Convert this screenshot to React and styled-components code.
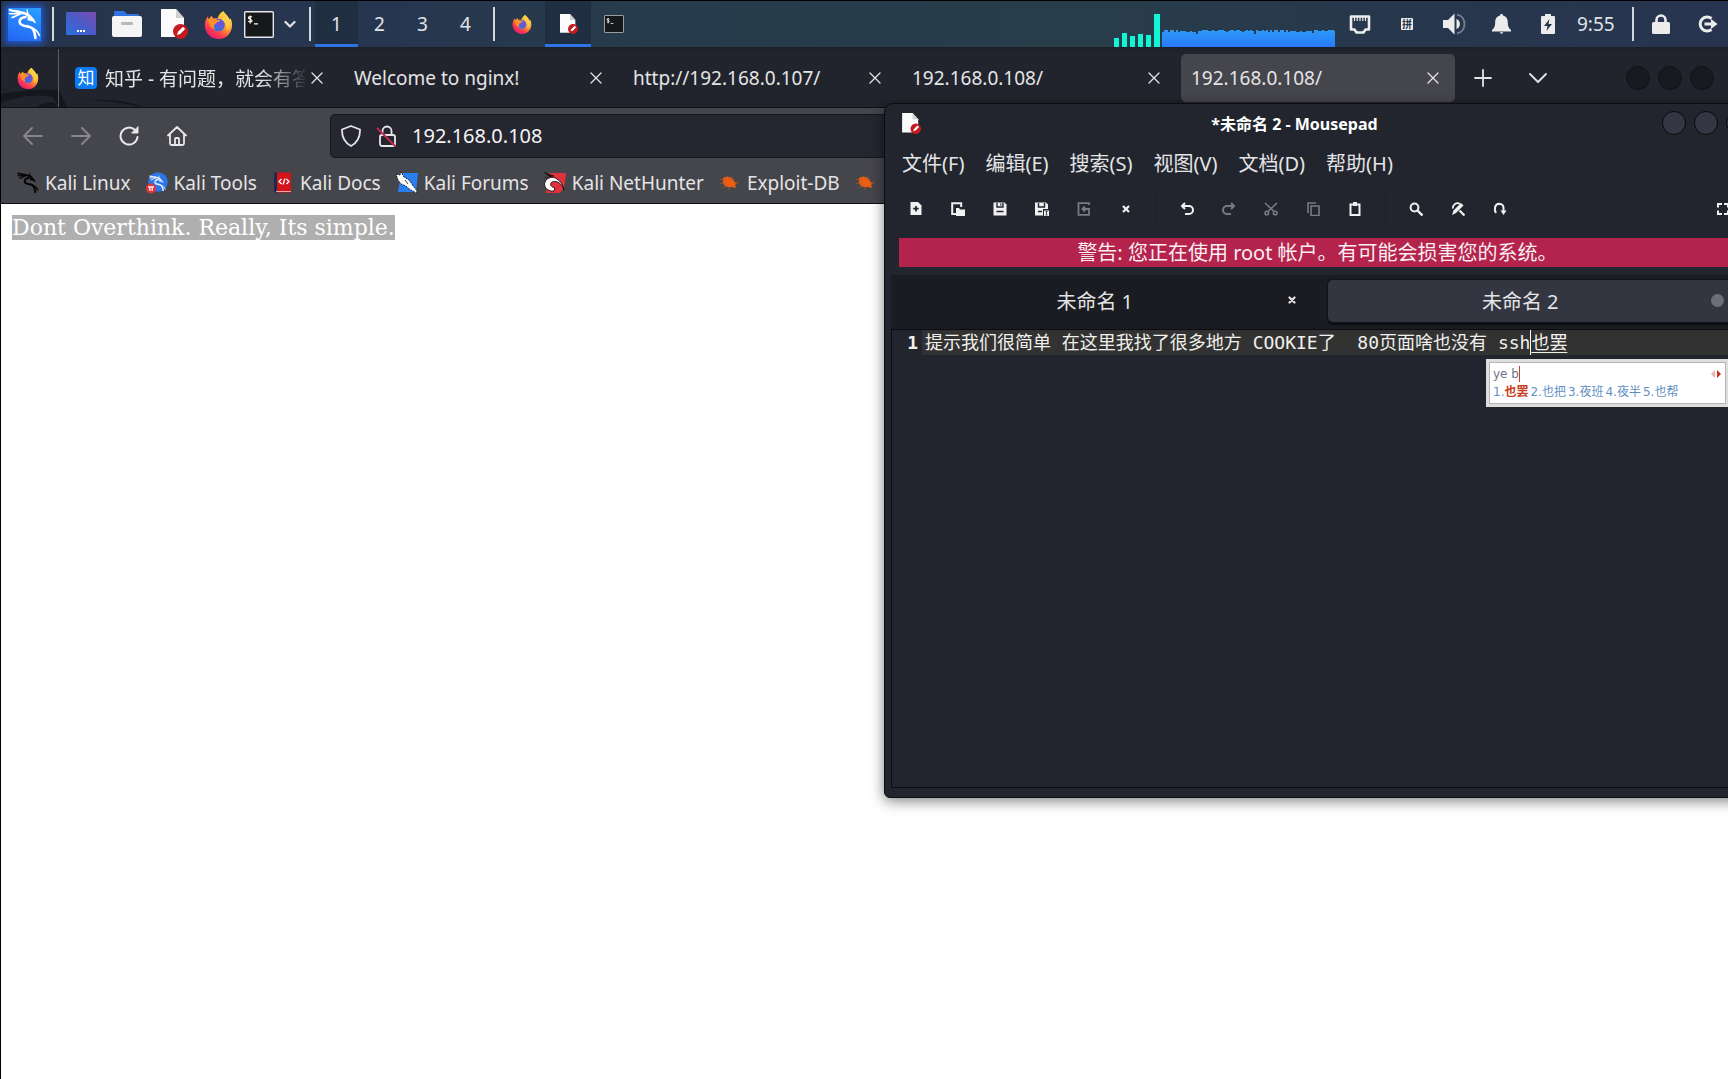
import React from "react";
import styled, { createGlobalStyle, css } from "styled-components";

const ui = `"Noto Sans", "Noto Sans CJK SC", sans-serif`;
const mono = `"DejaVu Sans Mono", "Noto Sans CJK SC", monospace`;

const Global = createGlobalStyle`
  * { box-sizing: border-box; }
  body { margin: 0; font-family: ${ui}; font-size: 19px; color: #e4e4e6; background: #000; }
  button { font: inherit; color: inherit; background: none; border: 0; padding: 0; display: inline-flex; align-items: center; justify-content: center; }
  a { color: inherit; text-decoration: none; }
  svg { display: block; flex: none; }
`;

const Desktop = styled.div`
  position: relative;
  height: 100vh;
  overflow: hidden;
  display: flex;
  flex-direction: column;
  border-top: 1px solid #000;
  border-left: 1px solid #000;
`;

/* ---------- top panel ---------- */
const Panel = styled.header`
  flex: none;
  height: 46px;
  display: flex;
  align-items: center;
  padding: 0 0 0 7px;
  background: linear-gradient(90deg, #26334b 0%, #273650 22%, #263b4b 36%, #283d4a 62%, #27374d 82%, #28344f 100%);
`;
const Divider = styled.span`
  flex: none;
  width: 2px;
  height: 34px;
  background: #d3d7dc;
`;
const KaliButton = styled.button`
  width: 33px;
  height: 33px;
  margin-right: 11px;
  color: #fff;
  background: linear-gradient(200deg, #2ba0ff, #2364f4);
  box-shadow: 0 0 7px 3px #2159cf;
`;
const Launchers = styled.nav`
  display: flex;
  align-items: center;
  gap: 16px;
  margin: 0 13px 0 12px;
`;
const Split = styled.div`
  display: flex;
  align-items: center;
  gap: 10px;
  margin-left: -5px;
`;
const Workspaces = styled.nav`
  display: flex;
  height: 100%;
  margin: 0 6px 0 4px;
`;
const PanelTab = styled.button`
  width: ${(p) => (p.$wide ? 46 : 43)}px;
  height: 100%;
  border-bottom: 3px solid transparent;
  border-top: 3px solid transparent;
  ${(p) => p.$active && css`
    background: #1f2e40;
    border-top-color: #1f2e40;
    border-bottom-color: #2f74e6;
  `}
`;
const Tasks = styled.nav`
  display: flex;
  height: 100%;
  margin-left: 4px;
`;
const Spacer = styled.div`
  flex: 1;
`;
const Monitor = styled.div`
  display: flex;
  align-items: flex-end;
  align-self: stretch;
  margin-right: 5px;
`;
const Tray = styled.div`
  display: flex;
  align-items: center;
  gap: 7px;
`;
const TrayButton = styled.button`
  width: 40px;
  height: 46px;
  color: #ececec;
`;
const Clock = styled.time`
  width: 50px;
  padding-left: 2px;
  color: #dfe3e6;
`;
const PinBadge = styled.span`
  width: 12px;
  height: 12px;
  border-radius: 1px;
  background: #ececec;
  color: #26374b;
  font-size: 10px;
  line-height: 12px;
  font-weight: 700;
  text-align: center;
`;

/* ---------- browser ---------- */
const Browser = styled.main`
  flex: 1;
  display: flex;
  flex-direction: column;
  min-height: 0;
  background: #fff;
`;
const TabBar = styled.div`
  position: relative;
  flex: none;
  height: 61px;
  display: flex;
  align-items: center;
  padding: 2px 14px 0 0;
  background: linear-gradient(#1b1f26, #22242d 6px);
  border-bottom: 1px solid #0e0f13;
`;
const Wallpaper = styled.svg`
  position: absolute;
  left: 0;
  bottom: 0;
`;
const FirefoxSlot = styled.div`
  position: relative;
  align-self: stretch;
  width: 58px;
  display: flex;
  align-items: center;
  justify-content: center;
  padding-right: 4px;
  border-right: 1px solid #5a5c63;
  margin-right: 6px;
`;
const Tabs = styled.div`
  position: relative;
  display: flex;
  gap: 5px;
  flex: 0 1 1390px;
  min-width: 0;
`;
const Tab = styled.div`
  flex: 1 1 0;
  min-width: 0;
  height: 48px;
  display: flex;
  align-items: center;
  gap: 8px;
  padding: 0 10px;
  border-radius: 5px;
  background: ${(p) => (p.$active ? "#45454c" : "transparent")};
`;
const Favicon = styled.span`
  flex: none;
  width: 22px;
  height: 22px;
  border-radius: 4px;
  background: #0a7af5;
  color: #fff;
  font-size: 17px;
  line-height: 21px;
  text-align: center;
`;
const TabTitle = styled.span`
  flex: 1;
  min-width: 0;
  overflow: hidden;
  white-space: nowrap;
  ${(p) => p.$fade && css`
    mask-image: linear-gradient(90deg, #000 78%, transparent 102%);
  `}
`;
const CloseButton = styled.button`
  flex: none;
  width: 24px;
  height: 24px;
  margin-left: ${(p) => (p.$tight ? -8 : 0)}px;
`;
const TabTool = styled.button`
  position: relative;
  width: 55px;
  height: 48px;
`;
const Circles = styled.div`
  display: flex;
  gap: 8px;
  margin-left: auto;
`;
const Circle = styled.button`
  width: 24px;
  height: 24px;
  border-radius: 50%;
  border: 1px solid ${(p) => (p.$dim ? "#101116" : "#08090c")};
  background: ${(p) => (p.$dim ? "#191a20" : "#343743")};
`;
const NavBar = styled.div`
  flex: none;
  height: 55px;
  display: flex;
  align-items: center;
  padding-left: 8px;
  background: #45454c;
`;
const NavButton = styled.button`
  width: 48px;
  height: 44px;
  color: #e8e8ea;
  opacity: ${(p) => (p.$off ? 0.4 : 1)};
`;
const UrlBox = styled.label`
  flex: 1;
  display: flex;
  align-items: center;
  height: 44px;
  margin: 0 160px 0 129px;
  padding: 0 9px;
  gap: 14px;
  border: 1px solid #15161b;
  border-radius: 5px;
  background: #25262f;
`;
const UrlInput = styled.input`
  flex: 1;
  min-width: 0;
  border: 0;
  padding: 0;
  outline: 0;
  background: none;
  color: #f4f4f6;
  font: inherit;
  font-size: 20px;
`;
const Bookmarks = styled.nav`
  flex: none;
  height: 41px;
  display: flex;
  align-items: center;
  gap: 15px;
  padding: 0 0 1px 16px;
  background: #45454c;
  border-bottom: 1px solid #0e0f13;
  white-space: nowrap;
`;
const Bookmark = styled.a`
  display: flex;
  align-items: center;
  gap: 6px;
`;
const PageBody = styled.article`
  padding: 11px;
  font-family: "DejaVu Serif", serif;
  font-size: 22px;
  line-height: 25px;
`;
const Selected = styled.span`
  display: inline-block;
  background: #afafaf;
  color: #fff;
`;

/* ---------- Mousepad ---------- */
const Window = styled.section`
  position: absolute;
  left: 883px;
  right: -32px;
  top: 102px;
  height: 695px;
  display: flex;
  flex-direction: column;
  padding: 0 6px 9px;
  border: 1px solid #0c0d12;
  border-radius: 9px 9px 6px 6px;
  background: #22252e;
  box-shadow: 0 3px 14px rgba(0, 0, 0, 0.5);
  font-size: 20px;
`;
const TitleBar = styled.div`
  flex: none;
  height: 38px;
  display: flex;
  align-items: center;
  padding: 0 3px 0 9px;
`;
const Title = styled.h1`
  flex: 1;
  margin: 0;
  padding-left: 6px;
  text-align: center;
  font-size: 16px;
  font-weight: 700;
  color: #fff;
`;
const MenuBar = styled.nav`
  flex: none;
  height: 41px;
  display: flex;
  align-items: center;
  gap: 21px;
  padding-left: 11px;
`;
const ToolBar = styled.div`
  flex: none;
  height: 51px;
  display: flex;
  align-items: center;
  padding: 0 9px 0 4px;
`;
const ToolButton = styled.button`
  width: 42px;
  height: 40px;
  color: ${(p) => (p.$off ? "#777a82" : "#f1f1f1")};
`;
const ToolRule = styled.span`
  width: 1px;
  height: 40px;
  margin: 0 9px;
  background: #1e2129;
`;
const Warning = styled.p`
  flex: none;
  margin: 4px 17px 8px 8px;
  height: 29px;
  line-height: 29px;
  text-align: center;
  color: #fbeef2;
  background: #b4234b;
`;
const DocTabs = styled.div`
  flex: none;
  height: 54px;
  display: flex;
  padding: 5px 0 7px 11px;
  background: #1b1c22;
`;
const DocTab = styled.div`
  flex: 1;
  display: flex;
  align-items: center;
  padding: 0 24px 2px 8px;
  border-radius: 5px;
  ${(p) => p.$active && css`
    background: #333641;
    box-shadow: 0 0 0 1px #121318, 0 2px 1px 1px #0c0d12;
  `}
`;
const DocName = styled.span`
  flex: 1;
  text-align: center;
`;
const Dot = styled.span`
  width: 13px;
  height: 13px;
  border-radius: 50%;
  background: #6d6f78;
`;
const Editor = styled.div`
  flex: 1;
  border: 1px solid #0c0d12;
  font-family: ${mono};
  font-size: 18px;
  line-height: 25px;
`;
const Line = styled.div`
  display: flex;
  color: #f0f0ec;
`;
const LineNumber = styled.span`
  width: 30px;
  padding-right: 4px;
  text-align: right;
  font-weight: 700;
`;
const LineText = styled.div`
  flex: 1;
  padding-left: 3px;
  white-space: pre;
  outline: 0;
  background: #323232;
`;
const Preedit = styled.u`
  border-left: 1px solid #fff;
  display: inline-block;
  text-underline-offset: 3px;
`;
const ImePopup = styled.aside`
  position: absolute;
  left: 1485px;
  right: -1px;
  top: 358px;
  padding: 3px;
  background: #dedede;
  font-family: "DejaVu Sans", "Noto Sans CJK SC", sans-serif;
  font-size: 12px;
  line-height: 19px;
`;
const ImeInner = styled.div`
  padding: 1px 3px;
  border: 1px solid #b5b5b5;
  background: #fff;
`;
const ImeRow = styled.div`
  display: flex;
  align-items: center;
  height: 19px;
  gap: 2px;
  color: #5f8fc4;
`;
const Composing = styled.span`
  margin-right: auto;
  line-height: 16px;
  color: #6d7486;
  border-right: 1px solid #c8401f;
`;
const Candidate = styled.button`
  b { color: #c8401f; }
`;

/* ---------- drawings ---------- */
const Dragon = ({ size, weight = 2.6, ...rest }) => (
  <svg width={size} height={size} viewBox="0 0 33 33" fill="none" stroke="currentColor" strokeLinecap="round" strokeLinejoin="round" {...rest}>
    <path d="M2 2c4 1.500 7 1 11 2.500" strokeWidth={weight * 0.9} />
    <path d="M1.500 5.500c4 .6 7 0 11.500-.2M4 9.500c3-.6 5-2.500 8.500-3.500" strokeWidth={weight * 0.6} />
    <path d="M12 4.500c4 .2 7 1.500 9.500 3.500" strokeWidth={weight} />
    <path d="M20 6.500L19 1.800" strokeWidth={weight * 0.5} />
    <path d="M19.500 6.500c4.500 1.500 6.500 4.500 8 8.500l-3-2-5-1.200c1-1.500.6-3.300 0-5.300z" fill="currentColor" strokeWidth={weight * 0.3} />
    <path d="M17.500 9c-4 .3-6.500 2.600-5.800 5.500.8 3.400 5.500 3.500 9.300 4.200 3.700.8 5.500 3.300 6.500 11.300" strokeWidth={weight} />
    <path d="M24.500 20c3.500 1.500 5.500 4 7 7.500" strokeWidth={weight * 0.6} />
  </svg>
);

const Firefox = ({ size }) => {
  const id = `ff${size}`;
  return (
    <svg width={size} height={size} viewBox="0 0 30 30">
      <defs>
        <linearGradient id={`${id}a`} x1="0.8" y1="0.1" x2="0.2" y2="0.95">
          <stop offset="0" stopColor="#ffe14a" />
          <stop offset="0.4" stopColor="#ff9a2e" />
          <stop offset="0.75" stopColor="#fb3a4e" />
          <stop offset="1" stopColor="#e3197a" />
        </linearGradient>
        <radialGradient id={`${id}b`} cx="0.6" cy="0.4">
          <stop offset="0" stopColor="#8246d8" />
          <stop offset="1" stopColor="#3b6fe0" />
        </radialGradient>
      </defs>
      <path d="M20 1c1 3 5 5 6.600 9l1-1.500c2 5 2 11-1 15.200A14 14 0 0 1 1.500 20C0 15 1.200 10 4 6.500l.6 3L8 6l1.500 3c2-.6 3-.6 4.500-.3C15 5 17 3 20 1z" fill={`url(#${id}a)`} />
      <circle cx="15" cy="15.500" r="6.500" fill={`url(#${id}b)`} />
      <path d="M4.500 9.500c3-1.500 6-1 8 .8 1.500-.4 3.500 0 4.500 1.200-1.500.8-4 1.200-4.500 2.500-2 .8-3 3-1 5.500-4 0-7.500-5-7-10z" fill="#ff8f2a" />
      <path d="M18 9c5-3 3-6 2-8 2 3 7 6 7 13 0 3-1 6-4 8 1-5-.5-9-5-13z" fill="#ffd24a" opacity=".75" />
    </svg>
  );
};

const Doc = ({ size }) => (
  <svg width={size} height={size} viewBox="0 0 30 30">
    <path d="M3 0h15l8 9v19H3z" fill="#fbfbfb" />
    <path d="M18 0l8 9h-8z" fill="#cfd0d4" />
    <circle cx="22.500" cy="22.500" r="7.500" fill="#c41a20" />
    <path d="M19 26l1-3.200 5-5 2.200 2.200-5 5z" fill="#fff" />
  </svg>
);

const Terminal = ({ w, h, line = "#e8e8e8" }) => (
  <svg width={w} height={h} viewBox="0 0 30 27">
    <rect x=".7" y=".7" width="28.600" height="25.600" rx="1" fill="#17181a" stroke={line} strokeWidth="1.400" />
    <path d="M8 6.200c-1-1-3.500-.8-3.500.6 0 1.700 3.500 1.200 3.500 3 0 1.500-2.600 1.500-3.700.4M6.200 4.500v8M10 12.800h4" stroke="#fff" strokeWidth="1.200" fill="none" />
  </svg>
);

const Screen = () => (
  <svg width="30" height="24" viewBox="0 0 30 24">
    <defs>
      <linearGradient id="scr" x1="0" y1="1" x2="1" y2="0">
        <stop offset="0" stopColor="#2c70e0" />
        <stop offset="0.5" stopColor="#4a5bc8" />
        <stop offset="1" stopColor="#7d4db0" />
      </linearGradient>
    </defs>
    <rect width="30" height="23" rx="1" fill="url(#scr)" />
    <path d="M11 18h2v2h-2zM14 18h2v2h-2zM17 18h2v2h-2z" fill="#fff" />
  </svg>
);

const Folder = () => (
  <svg width="30" height="28" viewBox="0 0 30 28">
    <path d="M2 2q0-1 1-1h9l3 3h11q1 0 1 1v6H2z" fill="#2f74e0" />
    <rect y="6" width="30" height="21" rx="2" fill="#f5f5f5" />
    <rect x="9" y="12" width="12" height="3" rx="1" fill="#b8b8b8" />
  </svg>
);

const Stroke = ({ size = 20, w = 1.8, children, box = 20 }) => (
  <svg width={size} height={size} viewBox={`0 0 ${box} ${box}`} fill="none" stroke="currentColor" strokeWidth={w} strokeLinecap="round" strokeLinejoin="round">
    {children}
  </svg>
);

const Cross = () => <Stroke size={12} box={12} w={1.3}><path d="M1 1l10 10M11 1L1 11" /></Stroke>;
const BoldCross = () => <Stroke size={8} box={8} w={2.2}><path d="M1.500 1.500l5 5M6.500 1.500l-5 5" /></Stroke>;

const cpu = Array.from({ length: 87 }, (_, i) => 15 + ((i * 7 + ((i * i) % 11)) % 5) * 0.6 - (i % 29 === 17 ? 3 : 0));
const net = [9, 14, 11, 13, 12, 33];

const Graph = () => (
  <svg width="221" height="46" viewBox="0 0 221 46">
    <defs>
      <linearGradient id="cpu" x1="0" y1="28" x2="0" y2="46" gradientUnits="userSpaceOnUse">
        <stop offset="0" stopColor="#2b9cf4" />
        <stop offset="1" stopColor="#2a78ff" />
      </linearGradient>
    </defs>
    {net.map((h, i) => <rect key={i} x={i * 8} y={46 - h} width={i === 5 ? 6 : 5} height={h} fill="#14f5d6" />)}
    {cpu.map((h, i) => <rect key={i} x={48 + i * 2} y={46 - h} width="2" height={h} fill="url(#cpu)" shapeRendering="crispEdges" />)}
  </svg>
);

const tray = [
  ["Network", <svg width="22" height="19" viewBox="0 0 22 19"><path d="M2 1.500h18v13h-3.500l-2 3h-7l-2-3H2z" fill="none" stroke="currentColor" strokeWidth="2.600" strokeLinejoin="round" /><path d="M5.500 2v4M8.200 2v4M11 2v4M13.800 2v4M16.500 2v4" stroke="currentColor" strokeWidth="1.200" /></svg>],
  ["Input method", <PinBadge>拼</PinBadge>],
  ["Volume", <svg width="23" height="22" viewBox="0 0 23 22"><path d="M0 7h5l6.500-6.500v21L5 15H0z" fill="currentColor" /><path d="M13.500 6c4.500 1.500 4.500 8.500 0 10z" fill="currentColor" /><path d="M14 1.500c10 2 10 17 0 19" fill="none" stroke="currentColor" strokeWidth="2" opacity=".4" /></svg>],
  ["Notifications", <svg width="19" height="20" viewBox="0 0 19 20"><path d="M9.500 0c1 0 1.500.6 1.500 1.400 3.500.8 4.800 3.600 4.800 6.600 0 4 .7 6 3.200 8v1.500H0V16c2.500-2 3.200-4 3.200-8 0-3 1.300-5.800 4.800-6.600C8 .6 8.500 0 9.500 0zM7.500 18.300h4l-2 1.700z" fill="currentColor" /></svg>],
  ["Battery", <svg width="14" height="20" viewBox="0 0 14 20"><path d="M4 0h6v2h3q1 0 1 1v16q0 1-1 1H1q-1 0-1-1V3q0-1 1-1h3z" fill="currentColor" /><path d="M8.500 5L3 12h3.500L5.500 17 11 10H7.500z" fill="#27364d" /></svg>],
];

const tools = [
  ["New", 0, <><path d="M1.500 0H9l3.500 3.500V13h-11z" fill="currentColor" /><path d="M7 4v5.500M4.200 6.700h5.500" stroke="#22252e" strokeWidth="1.700" /></>],
  ["Open", 0, <><path d="M6 12H1.200V1.200h9V5" fill="none" stroke="currentColor" strokeWidth="2" /><path d="M5 6h3l1 1.500h5V14H5z" fill="currentColor" /></>],
  ["Save", 0, <><path d="M.5.500h11l2 2v11H.5z" fill="currentColor" /><path d="M4 1v4h6V1M3.500 9.500h7" stroke="#22252e" strokeWidth="1.400" fill="none" /><path d="M7.800 1.500v2" stroke="#22252e" strokeWidth="1.200" /></>],
  ["Save as", 0, <><path d="M0 .5h11l2 2V7H8v6.500H0z" fill="currentColor" /><path d="M3.500 1v4h6V1M3 9.500h4" stroke="#22252e" strokeWidth="1.400" fill="none" /><path d="M9 8.500h5v5.500H9z" fill="currentColor" /><path d="M10.500 9.500h2M11.500 9.500V13M10.500 13h2" stroke="#22252e" strokeWidth=".8" /></>],
  ["Reload", 1, <path d="M12 3V1.200H1.500v11.600H12V7H5.500M8 4.500L5.500 7 8 9.500" fill="none" stroke="currentColor" strokeWidth="1.800" />],
  ["Close", 0, <path d="M4 4l6 6M10 4l-6 6" stroke="currentColor" strokeWidth="2.200" />],
  null,
  ["Undo", 0, <path d="M5 1L2 4l3 3M2.500 4H9a4 4 0 0 1 0 8H5" fill="none" stroke="currentColor" strokeWidth="2" />],
  ["Redo", 1, <path d="M9 1l3 3-3 3M11.500 4H5a4 4 0 0 0 0 8h4" fill="none" stroke="currentColor" strokeWidth="2" />],
  ["Cut", 1, <g fill="none" stroke="currentColor" strokeWidth="1.600"><path d="M1 1l9 8.500M13 1L4 9.500" /><circle cx="2.800" cy="11" r="1.800" /><circle cx="11.200" cy="11" r="1.800" /></g>],
  ["Copy", 1, <path d="M2 11V1h8M5 4h8v9.500H5z" fill="none" stroke="currentColor" strokeWidth="1.600" />],
  ["Paste", 0, <><path d="M2.500 2.500h9v10.500h-9z" fill="none" stroke="currentColor" strokeWidth="2" /><path d="M5 0h4v4H5z" fill="currentColor" /></>],
  null,
  ["Find", 0, <><circle cx="5.500" cy="5.500" r="3.900" fill="none" stroke="currentColor" strokeWidth="2" /><path d="M8.500 8.500l5 5" stroke="currentColor" strokeWidth="2.400" /></>],
  ["Replace", 0, <><path d="M2 6.500A4.500 4.500 0 0 1 9 2" fill="none" stroke="currentColor" strokeWidth="1.800" /><path d="M10 1l2.500 2.500-7.500 7.500-4 2 1.500-4.500z" fill="currentColor" /><path d="M8.500 8.500l5 5" stroke="currentColor" strokeWidth="2.200" /></>],
  ["Go to", 0, <><path d="M3 11c-2-3-1.500-9 3-9.200C9.500 1.800 10.500 4 10.500 6v4" fill="none" stroke="currentColor" strokeWidth="2" /><path d="M7.500 8.500h6L10.500 13z" fill="currentColor" /></>],
];

const tabs = [
  { title: "知乎 - 有问题，就会有答案", icon: true },
  { title: "Welcome to nginx!" },
  { title: "http://192.168.0.107/" },
  { title: "192.168.0.108/" },
  { title: "192.168.0.108/", active: true },
];

const Bug = () => (
  <svg width="22" height="22" viewBox="0 0 22 22">
    <path d="M4 6c4-2 8-2 10 2l4 4-2 1 1 3-4-1c-4 1-8-1-9-4z" fill="#ee5f14" />
    <path d="M1 7l6 2M1 11l6 1M4 16l5-3M8 4l3 4M13 5l2 4M20 10l-5 2M9 18l3-4" stroke="#b5561f" strokeWidth=".7" />
  </svg>
);

const bookmarks = [
  ["Kali Linux", <Dragon size={22} color="#050505" weight={3} />],
  ["Kali Tools", (
    <svg width="22" height="22" viewBox="0 0 22 22">
      <circle cx="12" cy="10" r="9.800" fill="#2d74e8" />
      <Dragon x="3" y="3" size={17} color="#dcebff" weight={3} />
      <circle cx="5" cy="16.500" r="5" fill="#e0343c" />
      <path d="M2 14.800h6M3.900 15v4M6.200 15v4" stroke="#fff" strokeWidth="1.200" />
    </svg>
  )],
  ["Kali Docs", (
    <svg width="22" height="22" viewBox="0 0 22 22">
      <path d="M4 .5h15v20H4z" fill="#d3141b" />
      <path d="M2 .5h3v20H2z" fill="#1c2a52" />
      <path d="M4 19.500h15" stroke="#f0a5a5" strokeWidth="1" />
      <path d="M9.500 7L7 9.500 9.500 12M14.500 7L17 9.500 14.500 12M13 6.500l-2 6" stroke="#fff" strokeWidth="1.300" fill="none" />
    </svg>
  )],
  ["Kali Forums", (
    <svg width="22" height="22" viewBox="0 0 22 22">
      <path d="M5 1h17l-2 19H2z" fill="#2a7ff0" />
      <path d="M0 2l4 1 1-3 3 5 5 3c2 2 3 5 5 7l3 4-1 2-3-2c-3-1-5-3-7-5L5 12 2 8z" fill="#fff" stroke="#111" strokeWidth=".9" strokeDasharray="2 1" />
      <path d="M9 8l3 4" stroke="#111" strokeWidth=".8" />
    </svg>
  )],
  ["Kali NetHunter", (
    <svg width="22" height="22" viewBox="0 0 22 22">
      <path d="M5 1h17l-2 15-4 5H2z" fill="#e2303a" />
      <path d="M20 18c-2-7-8-10-12-8-3 2-1 5 3 6l-1 3C4 20-1 15 1 10c2-5 8-6 12-3 4 2 6 7 7 11z" fill="#fff" stroke="#111" strokeWidth=".9" />
      <path d="M0 0l4 2 6 2-4 1zM1 5l5 1" fill="#111" stroke="#111" strokeWidth=".6" />
    </svg>
  )],
  ["Exploit-DB", <Bug />],
];

export default function App() {
  return (
    <Desktop>
      <Global />
      <Panel>
        <KaliButton aria-label="Applications"><Dragon size={33} /></KaliButton>
        <Divider />
        <Launchers aria-label="Launchers">
          <button aria-label="Show desktop"><Screen /></button>
          <button aria-label="Files"><Folder /></button>
          <button aria-label="Text editor"><Doc size={30} /></button>
          <button aria-label="Firefox"><Firefox size={29} /></button>
          <Split>
            <button aria-label="Terminal"><Terminal w={30} h={27} /></button>
            <button aria-label="More terminals"><Stroke size={12} box={12} w={2.2}><path d="M1.500 4L6 8.500 10.500 4" /></Stroke></button>
          </Split>
        </Launchers>
        <Divider />
        <Workspaces aria-label="Workspaces">
          {[1, 2, 3, 4].map((n) => <PanelTab key={n} $active={n === 1}>{n}</PanelTab>)}
        </Workspaces>
        <Divider />
        <Tasks aria-label="Open windows">
          <PanelTab $wide aria-label="Firefox"><Firefox size={20} /></PanelTab>
          <PanelTab $wide $active aria-label="Mousepad"><Doc size={20} /></PanelTab>
          <PanelTab $wide aria-label="Terminal"><Terminal w={20} h={18} line="#a9adb2" /></PanelTab>
        </Tasks>
        <Spacer />
        <Monitor><Graph /></Monitor>
        <Tray>
          {tray.map(([name, icon]) => <TrayButton key={name} aria-label={name}>{icon}</TrayButton>)}
          <Clock>9:55</Clock>
          <Divider />
          <TrayButton aria-label="Lock"><svg width="18" height="20" viewBox="0 0 18 20"><path d="M4.500 9V6a4.500 4.500 0 0 1 9 0v3" fill="none" stroke="currentColor" strokeWidth="2.600" /><rect y="8" width="18" height="12" rx="1.500" fill="currentColor" /></svg></TrayButton>
          <TrayButton aria-label="Log out"><svg width="20" height="18" viewBox="0 0 20 18"><path d="M13.500 3.500a7 7 0 1 0 0 11" fill="none" stroke="currentColor" strokeWidth="3" /><path d="M6.500 7.500H13V4l6.500 5L13 14v-3.500H6.500z" fill="currentColor" /></svg></TrayButton>
        </Tray>
      </Panel>

      <Browser>
        <TabBar>
          <Wallpaper width="150" height="18" viewBox="0 0 150 18">
            <path d="M0 5C20 1 42 0 58 1l8 17h-8L52 8C36 4 14 8 0 14z" fill="#15171d" />
            <path d="M36 18c6-4 12-6 18-4l3 4z" fill="#15171d" />
            <path d="M88 11c18-1 40 1 54 7-16-3-34-6-54-7z" fill="#13151a" />
          </Wallpaper>
          <FirefoxSlot><Firefox size={22} /></FirefoxSlot>
          <Tabs role="tablist">
            {tabs.map((t, i) => (
              <Tab key={i} role="tab" aria-selected={!!t.active} $active={t.active}>
                {t.icon && <Favicon>知</Favicon>}
                <TabTitle $fade={t.icon}>{t.title}</TabTitle>
                <CloseButton aria-label="Close tab" $tight={t.icon}><Cross /></CloseButton>
              </Tab>
            ))}
          </Tabs>
          <TabTool aria-label="New tab"><Stroke size={18} box={18} w={1.8}><path d="M9 1v16M1 9h16" /></Stroke></TabTool>
          <TabTool aria-label="List tabs"><Stroke size={18} box={18} w={1.8}><path d="M1 5l8 8 8-8" /></Stroke></TabTool>
          <Circles>
            {["Minimise", "Maximise", "Close"].map((n) => <Circle key={n} aria-label={n} $dim />)}
          </Circles>
        </TabBar>
        <NavBar>
          <NavButton $off aria-label="Back"><Stroke><path d="M19 10H1M9 2L1 10l8 8" /></Stroke></NavButton>
          <NavButton $off aria-label="Forward"><Stroke><path d="M1 10h18M11 2l8 8-8 8" /></Stroke></NavButton>
          <NavButton aria-label="Reload"><Stroke w={2}><path d="M18.500 11a8.500 8.500 0 1 1-2.500-7l2 2" /><path d="M19 1v6h-6z" fill="currentColor" strokeWidth="1" /></Stroke></NavButton>
          <NavButton aria-label="Home"><Stroke w={1.8}><path d="M1 9.500L10 1l9 8.500M3 8v9.500Q3 19 4.500 19h11q1.500 0 1.500-1.500V8M8 19v-6q0-1 1-1h2q1 0 1 1v6" /></Stroke></NavButton>
          <UrlBox>
            <Stroke size={22} box={22} w={1.8}><path d="M11 1l9 3.500c.2 7-2.500 13-9 16.500C4.500 17.500 1.800 11.500 2 4.500z" /></Stroke>
            <svg width="22" height="22" viewBox="0 0 22 22" fill="none" stroke="#e8e8ea" strokeWidth="1.800">
              <path d="M6.500 10V6a4.500 4.500 0 0 1 9 0v4" />
              <rect x="4" y="10" width="15" height="11" rx="2" />
              <path d="M1 3l18 18" stroke="#c4284f" strokeWidth="2" />
            </svg>
            <UrlInput aria-label="Address" defaultValue="192.168.0.108" />
          </UrlBox>
        </NavBar>
        <Bookmarks aria-label="Bookmarks">
          {bookmarks.map(([name, icon]) => <Bookmark key={name} href="#">{icon}{name}</Bookmark>)}
          <Bookmark href="#" aria-label="Google Hacking DB"><Bug /></Bookmark>
        </Bookmarks>
        <PageBody><Selected>Dont Overthink. Really, Its simple.</Selected></PageBody>
      </Browser>

      <Window aria-label="Mousepad">
        <TitleBar>
          <Doc size={21} />
          <Title>*未命名 2 - Mousepad</Title>
          <Circles>
            {["Minimise", "Maximise", "Close"].map((n) => <Circle key={n} aria-label={n} />)}
          </Circles>
        </TitleBar>
        <MenuBar>
          {["文件(F)", "编辑(E)", "搜索(S)", "视图(V)", "文档(D)", "帮助(H)"].map((m) => <button key={m}>{m}</button>)}
        </MenuBar>
        <ToolBar>
          {tools.map((t, i) => t ? (
            <ToolButton key={i} aria-label={t[0]} $off={t[1]}><svg width="14" height="14" viewBox="0 0 14 14">{t[2]}</svg></ToolButton>
          ) : <ToolRule key={i} />)}
          <Spacer />
          <ToolButton aria-label="Full screen"><svg width="14" height="14" viewBox="0 0 14 14"><path d="M6 2H2v3.500M2 8.500V12h4M8 2h4v3.500M12 8.500V12H8" fill="none" stroke="currentColor" strokeWidth="2" /></svg></ToolButton>
        </ToolBar>
        <Warning>警告: 您正在使用 root 帐户。有可能会损害您的系统。</Warning>
        <DocTabs role="tablist">
          <DocTab role="tab" aria-selected="false"><DocName>未命名 1</DocName><CloseButton aria-label="Close document"><BoldCross /></CloseButton></DocTab>
          <DocTab role="tab" aria-selected="true" $active><DocName>未命名 2</DocName><CloseButton aria-label="Close document"><Dot /></CloseButton></DocTab>
        </DocTabs>
        <Editor>
          <Line>
            <LineNumber>1</LineNumber>
            <LineText role="textbox" aria-label="Document text" contentEditable suppressContentEditableWarning>提示我们很简单 在这里我找了很多地方 COOKIE了  80页面啥也没有 ssh<Preedit>也罢</Preedit></LineText>
          </Line>
        </Editor>
      </Window>

      <ImePopup>
        <ImeInner>
          <ImeRow>
            <Composing>ye b</Composing>
            <svg width="12" height="10" viewBox="0 0 12 10"><path d="M5 1v8L1 5z" fill="#ecb3a5" /><path d="M7 1v8l4-4z" fill="#c8301a" /></svg>
          </ImeRow>
          <ImeRow>
            <Candidate>1.<b>也罢</b></Candidate>
            {["也把", "夜班", "夜半", "也帮"].map((c, i) => <Candidate key={c}>{i + 2}.{c}</Candidate>)}
          </ImeRow>
        </ImeInner>
      </ImePopup>
    </Desktop>
  );
}
